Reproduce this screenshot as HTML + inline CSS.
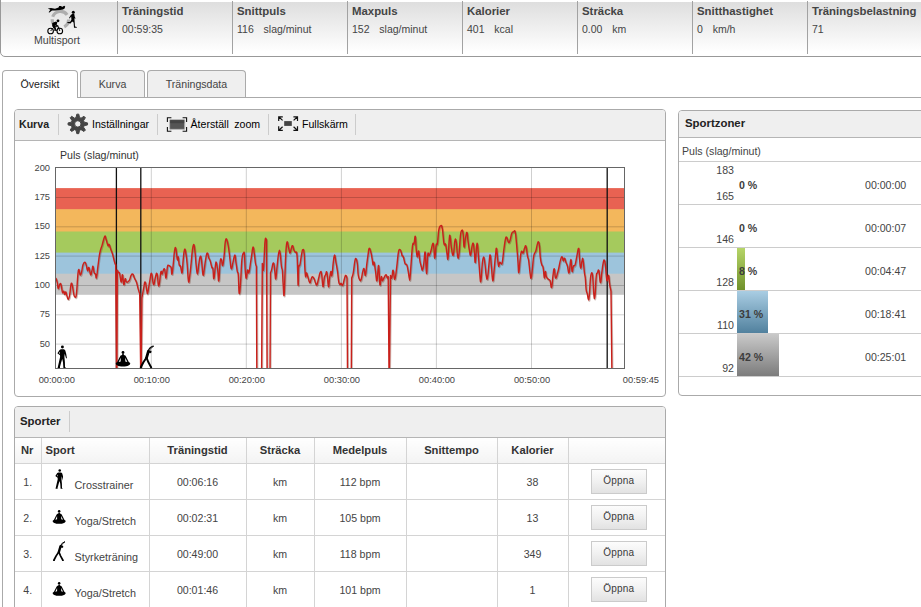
<!DOCTYPE html>
<html><head><meta charset="utf-8"><title>Träning</title>
<style>
*{box-sizing:border-box;margin:0;padding:0}
html,body{width:921px;height:607px;overflow:hidden;background:#fff}
body{font-family:"Liberation Sans",Arial,sans-serif;font-size:10.6px;color:#333;position:relative}
.abs{position:absolute}
#topbar{position:absolute;left:0px;top:-1px;width:926px;height:58px;border:1px solid #999;border-radius:0 0 0 5px;background:linear-gradient(#fff 0,#fff 2px,#dedede 2px,#fff 52px)}
.col{position:absolute;top:1px;height:53px;border-left:1px solid #a2a2a2;margin-left:1px}
.col b{position:absolute;left:4px;top:4px;font-size:11.4px;color:#444;white-space:nowrap}
.col span{position:absolute;left:4px;top:22px;font-size:10.5px;color:#444;white-space:nowrap;word-spacing:2px}
#ms{position:absolute;left:-2px;top:34px;width:116px;text-align:center;color:#444}
.tab{position:absolute;top:70px;height:27px;border:1px solid #aaa;border-bottom:none;border-radius:4px 4px 0 0;background:#efefef;text-align:center;line-height:27px;color:#444;font-size:10.6px}
.tab.on{background:#fff;height:28px;color:#222}
#content{position:absolute;left:2px;top:97px;width:930px;height:520px;border:1px solid #aaa}
.panel{position:absolute;border:1px solid #aaa;border-radius:4px;background:#fff;overflow:hidden}
.ph{position:absolute;left:0;top:0;right:0;height:31px;background:#efefef;border-bottom:1px solid #b5b5b5}
.ph b{position:absolute;left:4px;top:8px;font-size:10.6px;color:#222}
.sep{position:absolute;top:4px;width:1px;height:21px;background:#ccc}
.tb{position:absolute;top:8px;color:#000;white-space:nowrap}
table{border-collapse:collapse}
#st{position:absolute;left:0;top:30.5px;width:651px;table-layout:fixed;font-size:10.6px}
#st td,#st th{border:1px solid #d4d4d4;height:36px;text-align:center;color:#444;vertical-align:middle}
#st th{height:26px;font-size:11.2px;color:#333;background:linear-gradient(#fff,#f3f3f3)}
#st tr td:first-child,#st tr th:first-child{border-left:none}
#st tr td:last-child,#st tr th:last-child{border-right:none}
#st tr:first-child th{border-top:none}
.btn{display:inline-block;position:relative;left:1.5px;top:-0.5px;width:56px;height:25px;border:1px solid #cbcbcb;background:linear-gradient(#fcfcfc,#f2f2f2 45%,#e2e2e2);line-height:22px;font-size:10px;letter-spacing:.2px;color:#3a3a3a;vertical-align:middle}
.zr{position:absolute;left:0;right:0;height:43px;border-top:1px solid #ccc}
.zr .lo,.zr .hi{position:absolute;width:55px;text-align:right;left:0;color:#444}
.zr .pc{position:absolute;left:60px;top:17px;font-weight:bold;color:#3c3c3c;font-size:10.6px}
.zr .tm{position:absolute;left:186px;top:17px;color:#444}
.zr .bar{position:absolute;left:58px;top:0;height:43px}
#st td.sp{text-align:left;white-space:nowrap;vertical-align:bottom;padding-bottom:8px;font-size:10.8px}
#st td.sp svg{vertical-align:baseline}
#st td.sp i{display:inline-block;width:23px;margin-left:6px;text-align:center;font-style:normal;vertical-align:baseline;line-height:0}
#st td.sp span{margin-left:4px}
</style></head><body>
<div id="topbar">
 <svg class="abs" style="left:-1px;top:0" width="120" height="40" viewBox="0 0 120 40"><path d="M52.69 16.80 A8.2 8.2 0 0 1 67.12 14.90 M68.60 19.60 A8.2 8.2 0 0 1 64.25 26.84 M56.30 26.70 A8.2 8.2 0 0 1 52.20 19.31" fill="none" stroke="#a6a6a6" stroke-width="3.2" opacity=".9"/><path d="M47.8 8.6 L51 8 L55 8.8 L58.5 7.4 L59.2 6 L61.2 6 L62 7 L64.2 5.8 L65.2 6.6 L64.6 8.4 L63 9.4 L60 10 L55.5 10.6 L52 10.4 L49.5 12.6 L48.6 12.2 L50.4 9.8 Z" fill="#000"/><circle cx="73.3" cy="12.3" r="1.5" fill="#000"/><path d="M72.4 13.8 L74.2 13.8 L74.8 17 L75.6 18.2 L75 18.8 L74.4 18 L74.6 21 L75 26.4 L76.8 27 L76.8 27.8 L74 27.8 L73.6 22.5 L72.2 21.4 L70.5 23.5 L67.5 23 L67.3 22 L70 22 L71.4 19.8 L71.2 16.5 L69.6 18.4 L69 18 L70.8 15 Z" fill="#000"/><g fill="none" stroke="#000" stroke-width="1.1"><circle cx="50.6" cy="31" r="2.8"/><circle cx="59.8" cy="31" r="2.8"/><path d="M50.6 31 L54.5 26.5 L58.4 26.8 L59.8 31 M54.5 26.5 L56 31 L59 27" stroke-width=".9"/></g><circle cx="58" cy="20.8" r="1.4" fill="#000"/><path d="M52.2 23 L56 21.4 L57.4 22.6 L56.6 24.4 L58.8 26 L58.2 26.8 L55.6 25.6 L54.6 26 L56 28.6 L55.4 31 L54.2 30.8 L54.4 28.8 L52.2 26.2 Z" fill="#000"/></svg>
 <div id="ms">Multisport</div>
 <div class="col" style="left:115px;width:115px"><b>Träningstid</b><span>00:59:35</span></div>
 <div class="col" style="left:230px;width:115px"><b>Snittpuls</b><span>116 &nbsp;slag/minut</span></div>
 <div class="col" style="left:345px;width:115px"><b>Maxpuls</b><span>152 &nbsp;slag/minut</span></div>
 <div class="col" style="left:460px;width:115px"><b>Kalorier</b><span>401 &nbsp;kcal</span></div>
 <div class="col" style="left:575px;width:115px"><b>Sträcka</b><span>0.00 &nbsp;km</span></div>
 <div class="col" style="left:690px;width:115px"><b>Snitthastighet</b><span>0 &nbsp;km/h</span></div>
 <div class="col" style="left:805px;width:119px"><b>Träningsbelastning</b><span>71</span></div>
</div>

<div id="content"></div>
<div class="tab on" style="left:2px;width:76px">Översikt</div>
<div class="tab" style="left:80px;width:65px">Kurva</div>
<div class="tab" style="left:147px;width:99px">Träningsdata</div>

<div class="panel" style="left:14px;top:109px;width:652px;height:288px">
 <div class="ph"><b>Kurva</b>
  <div class="sep" style="left:43px"></div>
  <div class="tb" style="left:77px">Inställningar</div>
  <div class="sep" style="left:142px"></div>
  <div class="tb" style="left:175.5px;word-spacing:2.5px">Återställ zoom</div>
  <div class="sep" style="left:253px"></div>
  <div class="tb" style="left:287px">Fullskärm</div>
  <div class="sep" style="left:340px"></div>
 </div>
</div>
<svg class="abs" style="left:0;top:105px" width="400" height="40" viewBox="0 105 400 40">
<path d="M76.04 117.54 L76.82 114.15 L78.78 114.15 L79.56 117.54 L81.05 118.16 L84.00 116.31 L85.39 117.70 L83.54 120.65 L84.16 122.14 L87.55 122.92 L87.55 124.88 L84.16 125.66 L83.54 127.15 L85.39 130.10 L84.00 131.49 L81.05 129.64 L79.56 130.26 L78.78 133.65 L76.82 133.65 L76.04 130.26 L74.55 129.64 L71.60 131.49 L70.21 130.10 L72.06 127.15 L71.44 125.66 L68.05 124.88 L68.05 122.92 L71.44 122.14 L72.06 120.65 L70.21 117.70 L71.60 116.31 L74.55 118.16Z M81.00 123.90 A3.2 3.2 0 1 0 74.60 123.90 A3.2 3.2 0 1 0 81.00 123.90Z" fill="#454545" fill-rule="evenodd" stroke="#454545" stroke-width="1" stroke-linejoin="round"/>
<g fill="none" stroke="#111" stroke-width="1.1"><path d="M171.4 117.7H167.4V122 M182.6 117.7H186.6V122 M171.4 131.3H167.4V127 M182.6 131.3H186.6V127"/></g>
<rect x="169.6" y="119.6" width="15.2" height="9.8" rx="1" fill="#555" stroke="#bdbdbd" stroke-width="1"/>
<rect x="170.2" y="120.2" width="14" height="3" fill="#444"/>
<g fill="none" stroke="#111" stroke-width="1.2"><path d="M282.8 116.8H278.7V121 M278.9 117L282.6 120.4 M293.4 116.8H297.5V121 M297.3 117L293.6 120.4 M282.8 130.4H278.7V126.2 M278.9 130.2L282.6 126.8 M293.4 130.4H297.5V126.2 M297.3 130.2L293.6 126.8"/></g>
<rect x="284.2" y="121.1" width="7.6" height="4.8" fill="#444"/>
</svg>
<svg id="chart" width="651" height="255" viewBox="14 140 651 255" style="position:absolute;left:14px;top:140px">
<rect x="55" y="167" width="569" height="201" fill="#fff"/>
<rect x="55" y="188.1" width="569" height="21.8" fill="#e86252"/>
<rect x="55" y="209.2" width="569" height="23.0" fill="#f3b75c"/>
<rect x="55" y="231.5" width="569" height="21.8" fill="#a5ca5d"/>
<rect x="55" y="252.6" width="569" height="21.8" fill="#9dc4dc"/>
<rect x="55" y="273.7" width="569" height="21.1" fill="#c6c6c6"/>
<line x1="55" x2="624" y1="197.5" y2="197.5" stroke="#000" stroke-opacity=".19" stroke-width="1"/>
<line x1="55" x2="624" y1="226.8" y2="226.8" stroke="#000" stroke-opacity=".19" stroke-width="1"/>
<line x1="55" x2="624" y1="256.1" y2="256.1" stroke="#000" stroke-opacity=".19" stroke-width="1"/>
<line x1="55" x2="624" y1="285.5" y2="285.5" stroke="#000" stroke-opacity=".19" stroke-width="1"/>
<line x1="55" x2="624" y1="314.8" y2="314.8" stroke="#000" stroke-opacity=".19" stroke-width="1"/>
<line x1="55" x2="624" y1="344.1" y2="344.1" stroke="#000" stroke-opacity=".19" stroke-width="1"/>
<line x1="151.3" x2="151.3" y1="167" y2="368" stroke="#000" stroke-opacity=".19" stroke-width="1"/>
<line x1="246.3" x2="246.3" y1="167" y2="368" stroke="#000" stroke-opacity=".19" stroke-width="1"/>
<line x1="341.4" x2="341.4" y1="167" y2="368" stroke="#000" stroke-opacity=".19" stroke-width="1"/>
<line x1="436.4" x2="436.4" y1="167" y2="368" stroke="#000" stroke-opacity=".19" stroke-width="1"/>
<line x1="531.5" x2="531.5" y1="167" y2="368" stroke="#000" stroke-opacity=".19" stroke-width="1"/>
<line x1="116.4" x2="116.4" y1="167" y2="368" stroke="#111" stroke-width="1.3"/>
<line x1="140.8" x2="140.8" y1="167" y2="368" stroke="#111" stroke-width="1.3"/>
<line x1="607.2" x2="607.2" y1="167" y2="368" stroke="#111" stroke-width="1.3"/>
<clipPath id="cp"><rect x="55" y="167" width="569" height="201"/></clipPath>
<g clip-path="url(#cp)"><path d="M55.9 278.0 C56.2 279.1 56.8 280.1 57.3 282.6 C57.8 285.1 57.6 288.3 58.2 288.6 C58.8 288.9 59.2 284.8 59.9 284.0 C60.6 283.2 60.6 283.3 61.2 285.3 C61.8 287.3 61.9 291.1 62.5 292.5 C63.1 293.9 63.3 290.7 63.8 291.2 C64.3 291.7 64.3 294.3 64.8 294.5 C65.3 294.7 65.3 291.6 65.8 291.9 C66.3 292.2 66.3 294.1 66.9 295.8 C67.5 297.5 67.8 299.6 68.5 299.1 C69.2 298.6 69.2 297.3 69.8 293.8 C70.4 290.3 70.5 285.8 71.1 284.0 C71.7 282.2 71.8 283.6 72.4 285.9 C73.0 288.2 73.1 291.2 73.7 293.8 C74.3 296.4 74.5 297.1 75.1 297.1 C75.7 297.1 75.8 298.6 76.4 293.8 C77.0 289.0 77.2 282.4 77.7 276.7 C78.2 271.0 78.1 270.0 78.7 269.5 C79.3 269.0 79.5 274.0 80.1 274.7 C80.7 275.4 80.7 275.0 81.4 272.7 C82.1 270.4 82.2 267.2 83.0 264.8 C83.8 262.4 84.1 262.0 84.9 262.2 C85.7 262.4 85.7 263.5 86.3 265.5 C86.9 267.5 87.0 270.3 87.6 270.8 C88.2 271.3 88.2 266.6 88.9 267.5 C89.6 268.4 89.9 273.9 90.6 274.7 C91.3 275.5 91.3 272.8 91.9 270.8 C92.5 268.8 92.5 265.8 93.0 266.2 C93.5 266.6 93.6 270.9 94.2 272.7 C94.8 274.5 95.0 273.0 95.5 274.1 C96.0 275.2 95.9 279.6 96.5 277.4 C97.1 275.2 97.3 270.5 98.1 264.8 C98.9 259.1 98.9 257.6 99.8 253.0 C100.7 248.4 101.0 248.9 102.1 245.1 C103.2 241.2 103.8 237.9 104.7 236.5 C105.6 235.1 105.2 237.0 106.0 239.1 C106.8 241.2 107.3 244.5 108.0 245.7 C108.7 246.9 108.5 243.6 109.1 244.4 C109.7 245.2 109.9 246.7 110.7 249.0 C111.5 251.3 111.7 251.2 112.6 254.3 C113.5 257.4 113.9 259.8 114.6 262.2 C115.3 264.6 115.4 264.2 115.7 264.8 L116.5 372 L116.9 372 L117.3 270.1 C117.6 270.7 118.1 271.9 118.6 272.7 C119.1 273.5 119.0 271.2 119.6 273.4 C120.2 275.6 120.5 281.7 121.2 282.0 C121.9 282.3 121.9 274.1 122.5 274.7 C123.1 275.3 123.2 283.7 123.8 284.6 C124.4 285.5 124.6 279.3 125.2 278.7 C125.8 278.1 125.6 281.5 126.5 282.0 C127.4 282.5 128.0 282.2 129.1 280.7 C130.2 279.2 130.2 276.9 131.1 275.4 C132.0 273.9 132.0 273.5 132.8 274.1 C133.6 274.7 133.6 276.2 134.4 278.0 C135.2 279.8 135.5 279.5 136.4 282.0 C137.3 284.5 137.3 285.8 138.1 288.6 C138.9 291.4 139.3 292.6 139.7 293.8 L140.7 372 L141.1 372 L141.9 297.8 C142.3 295.7 142.8 292.3 143.6 288.6 C144.4 284.9 144.4 281.4 145.2 282.0 C146.0 282.6 146.3 288.8 146.9 291.2 C147.5 293.6 147.2 294.6 147.8 292.5 C148.4 290.4 148.7 286.5 149.6 282.0 C150.5 277.5 150.6 272.8 151.5 273.4 C152.4 274.0 152.6 283.8 153.5 284.6 C154.4 285.4 154.7 279.1 155.5 276.7 C156.3 274.2 156.3 272.0 157.1 274.1 C157.9 276.2 157.9 286.4 158.8 285.9 C159.7 285.4 160.0 274.9 160.8 272.1 C161.6 269.3 161.5 274.6 162.1 274.1 C162.7 273.6 162.8 271.2 163.4 270.1 C164.0 269.0 164.1 267.7 164.7 269.5 C165.3 271.3 165.4 278.6 166.0 278.0 C166.6 277.4 166.8 269.7 167.4 266.8 C168.0 263.9 168.1 265.6 168.7 265.5 C169.3 265.4 169.4 265.7 170.0 266.2 C170.6 266.7 170.6 265.7 171.1 267.5 C171.6 269.3 171.5 275.0 172.0 274.1 C172.5 273.2 172.7 269.1 173.3 263.5 C173.9 257.9 174.0 253.7 174.6 250.3 C175.2 246.9 175.3 246.8 175.9 249.0 C176.5 251.2 176.8 257.8 177.3 259.6 C177.8 261.4 177.8 255.7 178.2 256.9 C178.6 258.1 178.7 262.6 179.2 264.8 C179.7 267.0 179.8 264.4 180.5 266.2 C181.2 268.0 181.5 274.2 182.1 272.7 C182.7 271.2 182.6 265.0 183.2 259.6 C183.8 254.2 183.9 251.2 184.5 249.7 C185.1 248.2 185.2 249.8 185.8 253.0 C186.4 256.2 186.5 256.9 187.1 263.5 C187.7 270.1 187.9 278.5 188.5 281.3 C189.1 284.1 189.2 279.6 189.8 275.4 C190.4 271.2 190.5 269.4 191.1 263.5 C191.7 257.6 191.8 254.8 192.4 250.3 C193.0 245.8 193.1 244.4 193.7 244.4 C194.3 244.4 194.2 245.5 194.8 250.3 C195.4 255.1 195.5 259.2 196.1 264.8 C196.7 270.4 196.8 274.1 197.4 274.1 C198.0 274.1 198.1 268.8 198.7 264.8 C199.3 260.8 199.5 258.1 200.1 256.9 C200.7 255.7 200.7 255.4 201.4 259.6 C202.1 263.8 202.3 272.6 203.0 274.7 C203.7 276.8 203.7 272.3 204.3 268.8 C204.9 265.3 204.9 263.3 205.6 259.6 C206.3 255.9 206.4 253.3 207.2 253.0 C208.0 252.7 208.2 256.4 208.9 258.2 C209.6 260.0 209.5 258.7 210.2 260.9 C210.9 263.1 211.3 265.7 211.9 267.5 C212.5 269.3 212.4 266.2 212.9 268.8 C213.4 271.4 213.3 279.6 213.9 278.7 C214.5 277.8 214.9 268.5 215.5 264.8 C216.1 261.1 215.9 261.7 216.4 262.9 C216.9 264.1 217.1 265.9 217.7 270.1 C218.3 274.3 218.2 282.5 218.8 280.7 C219.4 278.9 219.5 267.1 220.1 262.2 C220.7 257.3 220.8 258.8 221.4 259.6 C222.0 260.4 222.1 266.4 222.7 265.5 C223.3 264.6 223.5 261.3 224.1 255.6 C224.7 249.9 224.7 244.6 225.4 241.1 C226.1 237.6 226.2 238.6 227.0 240.4 C227.8 242.2 228.0 244.5 228.7 249.0 C229.4 253.5 229.4 255.0 230.0 259.6 C230.6 264.2 230.6 268.2 231.3 268.8 C232.0 269.4 232.2 265.4 233.0 262.2 C233.8 259.0 234.2 254.9 234.9 254.9 C235.6 254.9 235.3 258.4 235.9 262.2 C236.5 266.0 236.7 268.3 237.3 271.4 C237.9 274.5 237.9 270.3 238.3 275.4 C238.7 280.5 238.7 291.4 239.2 293.2 C239.7 295.0 239.9 291.1 240.5 283.3 C241.1 275.5 241.2 266.7 241.9 259.6 C242.6 252.5 243.0 253.9 243.6 253.0 C244.2 252.1 244.1 251.0 244.5 255.6 C244.9 260.2 244.9 267.5 245.4 272.7 C245.9 277.9 246.0 278.6 246.5 278.0 C247.0 277.4 246.9 271.3 247.5 270.1 C248.1 268.9 248.2 274.2 248.9 272.7 C249.6 271.2 249.7 267.8 250.4 263.5 C251.1 259.2 251.2 258.2 251.8 254.3 C252.4 250.5 252.5 247.0 253.1 247.0 C253.7 247.0 253.8 250.5 254.4 254.3 C255.0 258.2 255.0 260.7 255.5 263.5 C256.0 266.3 256.2 265.6 256.4 266.2 L256.8 372 L261.6 372 L262.3 263.5 C262.6 265.0 262.9 272.2 263.4 270.1 C263.9 268.0 263.9 261.4 264.3 254.3 C264.7 247.2 264.7 243.2 265.2 239.8 C265.7 236.4 266.2 239.8 266.5 239.8 L267.1 372 L270.0 372 L270.5 272.7 C270.7 272.1 270.8 272.4 271.5 270.1 C272.2 267.8 272.7 262.6 273.5 262.9 C274.3 263.2 274.3 267.7 274.8 271.4 C275.3 275.1 275.3 279.9 275.8 278.7 C276.3 277.5 276.4 272.4 277.1 266.2 C277.8 260.0 278.1 255.4 278.8 252.3 C279.5 249.2 279.5 249.8 280.1 253.0 C280.7 256.2 280.9 262.0 281.4 266.2 C281.9 270.4 282.0 266.8 282.4 270.8 C282.8 274.8 282.7 277.6 283.1 283.3 C283.5 289.0 283.7 297.7 284.1 295.2 C284.5 292.7 284.6 283.2 285.0 272.7 C285.4 262.2 285.5 257.5 286.0 250.3 C286.5 243.1 286.5 242.2 287.1 241.8 C287.7 241.4 288.0 245.8 288.7 248.4 C289.4 251.0 289.4 253.0 290.0 253.0 C290.6 253.0 290.7 250.1 291.3 248.4 C291.9 246.7 292.0 245.3 292.6 245.7 C293.2 246.1 293.3 248.8 294.0 250.3 C294.7 251.8 294.8 251.4 295.5 252.3 C296.2 253.2 296.4 250.1 296.9 254.3 C297.4 258.5 297.3 262.9 297.6 270.1 C297.9 277.3 297.9 285.9 298.2 285.3 C298.5 284.7 298.3 272.3 298.7 267.5 C299.1 262.7 299.2 267.9 299.9 264.8 C300.6 261.7 300.9 257.8 301.6 254.3 C302.3 250.8 302.2 250.0 302.8 249.7 C303.4 249.4 303.6 248.8 304.1 253.0 C304.6 257.2 304.4 262.0 304.8 267.5 C305.2 273.0 305.2 275.5 305.6 276.7 C306.0 277.9 306.0 272.7 306.5 272.7 C307.0 272.7 307.0 274.4 307.8 276.7 C308.6 279.0 309.0 282.0 309.8 282.6 C310.6 283.2 310.5 280.7 311.1 279.3 C311.7 277.9 311.7 276.8 312.4 276.7 C313.1 276.6 313.2 277.2 314.0 278.7 C314.8 280.2 315.0 281.9 315.7 283.3 C316.4 284.7 316.3 285.8 317.0 284.6 C317.7 283.4 317.9 280.9 318.7 278.0 C319.5 275.1 319.6 273.0 320.3 272.1 C321.0 271.2 321.0 270.7 321.6 274.1 C322.2 277.5 322.4 285.7 323.0 286.6 C323.6 287.5 323.7 280.8 324.3 278.0 C324.9 275.2 325.0 275.9 325.6 274.7 C326.2 273.5 326.2 269.9 326.9 272.7 C327.6 275.5 327.9 285.4 328.5 286.6 C329.1 287.8 329.0 281.5 329.6 278.0 C330.2 274.5 330.4 272.0 330.9 271.4 C331.4 270.8 331.3 277.5 331.9 275.4 C332.5 273.3 332.7 267.0 333.3 262.2 C333.9 257.4 334.0 254.9 334.6 254.9 C335.2 254.9 335.2 258.4 335.9 262.2 C336.6 266.0 336.8 266.8 337.5 271.4 C338.2 276.0 338.2 278.9 338.8 282.0 C339.4 285.1 339.5 284.3 340.1 284.6 C340.7 284.9 340.6 283.1 341.2 283.3 C341.8 283.5 342.0 286.2 342.7 285.3 C343.4 284.4 343.6 281.6 344.3 279.3 C345.0 277.0 345.0 275.7 345.6 275.4 C346.2 275.1 346.7 277.4 347.0 278.0 L347.5 372 L351.3 372 L351.7 278.0 C352.1 276.8 352.6 276.7 353.3 272.7 C354.0 268.7 354.2 264.1 354.9 260.9 C355.6 257.7 355.6 258.3 356.2 258.9 C356.8 259.5 356.8 259.6 357.3 263.5 C357.8 267.4 357.7 271.5 358.3 275.4 C358.9 279.2 359.2 279.1 359.9 280.0 C360.6 280.9 360.5 281.3 361.2 279.3 C361.9 277.3 362.1 273.8 362.8 271.4 C363.5 268.9 363.5 267.9 364.1 268.8 C364.7 269.7 364.8 276.3 365.4 275.4 C366.0 274.5 366.1 269.7 366.7 264.8 C367.3 259.9 367.5 258.1 368.1 254.3 C368.7 250.5 368.5 249.0 369.1 248.4 C369.7 247.8 370.0 249.3 370.7 251.6 C371.4 253.9 371.4 255.1 372.0 258.2 C372.6 261.3 372.6 263.9 373.1 264.8 C373.6 265.7 373.5 260.7 374.1 262.2 C374.7 263.7 374.8 267.1 375.5 271.4 C376.2 275.7 376.3 282.1 377.0 280.7 C377.7 279.3 377.9 264.6 378.6 265.5 C379.3 266.4 379.3 282.0 379.9 284.6 C380.5 287.2 380.7 277.6 381.3 276.7 C381.9 275.8 381.7 280.4 382.3 280.7 C382.9 281.0 383.0 279.4 383.9 278.0 C384.8 276.6 385.2 274.7 386.0 274.7 C386.8 274.7 386.8 277.5 387.3 278.0 C387.8 278.5 388.0 277.0 388.2 276.7 L389.0 372 L389.4 372 L390.5 275.4 C390.8 276.0 391.2 279.2 391.8 278.0 C392.4 276.8 392.4 269.8 393.1 270.1 C393.8 270.4 394.0 279.6 394.8 279.3 C395.6 279.0 395.7 274.6 396.5 268.8 C397.3 263.0 397.5 258.8 398.1 254.3 C398.7 249.8 398.6 250.5 399.2 249.7 C399.8 248.9 400.1 249.6 400.8 251.0 C401.5 252.4 401.5 254.2 402.1 255.6 C402.7 257.0 402.7 255.1 403.4 256.9 C404.1 258.7 404.2 261.7 405.0 263.5 C405.8 265.3 406.0 263.3 406.7 264.8 C407.4 266.3 407.4 267.0 408.0 270.1 C408.6 273.2 408.8 276.2 409.3 278.0 C409.8 279.8 409.6 281.4 410.0 278.0 C410.4 274.6 410.5 271.2 411.1 263.5 C411.7 255.8 411.9 249.7 412.6 245.1 C413.3 240.5 413.4 245.7 414.0 243.7 C414.6 241.7 414.8 235.0 415.3 236.5 C415.8 238.0 415.8 245.5 416.3 250.3 C416.8 255.1 416.8 256.7 417.3 256.9 C417.8 257.1 418.0 250.1 418.6 251.0 C419.2 251.9 419.3 257.4 419.9 260.9 C420.5 264.4 420.6 264.1 421.2 266.2 C421.8 268.3 421.9 270.7 422.5 270.1 C423.1 269.5 423.2 267.7 423.8 263.5 C424.4 259.3 424.6 250.0 425.2 252.3 C425.8 254.6 425.9 272.9 426.5 273.4 C427.1 273.9 427.2 258.5 427.8 254.3 C428.4 250.1 428.3 256.5 429.1 255.6 C429.9 254.7 430.3 253.1 431.1 250.3 C431.9 247.5 432.1 244.6 432.7 243.7 C433.3 242.8 433.2 243.0 433.7 246.4 C434.2 249.8 434.2 258.5 434.8 258.2 C435.4 257.9 435.5 248.5 436.1 245.1 C436.7 241.7 436.8 247.1 437.4 243.7 C438.0 240.3 438.0 234.7 438.7 230.5 C439.4 226.3 439.8 226.3 440.6 225.9 C441.4 225.5 441.5 224.4 442.3 228.6 C443.1 232.8 443.2 240.0 444.0 243.7 C444.8 247.4 444.9 242.2 445.6 244.4 C446.3 246.6 446.3 249.8 446.9 253.0 C447.5 256.2 447.4 261.6 448.0 258.2 C448.6 254.8 448.8 243.4 449.3 238.5 C449.8 233.6 449.7 234.8 450.2 237.1 C450.7 239.4 450.8 244.2 451.5 248.4 C452.2 252.6 452.5 256.6 453.3 254.9 C454.1 253.2 454.1 244.2 454.8 241.1 C455.5 238.0 455.5 238.1 456.2 241.8 C456.9 245.5 457.0 254.3 457.7 256.9 C458.4 259.5 458.5 257.9 459.1 253.0 C459.7 248.1 459.8 241.1 460.4 235.8 C461.0 230.6 461.1 231.1 461.7 230.5 C462.3 229.9 462.4 229.3 463.0 233.2 C463.6 237.0 463.5 245.8 464.1 247.0 C464.7 248.2 464.7 241.9 465.4 238.5 C466.1 235.1 466.4 231.9 467.0 232.5 C467.6 233.1 467.4 236.6 468.0 241.1 C468.6 245.6 469.0 248.4 469.6 251.6 C470.2 254.8 470.1 256.1 470.7 254.9 C471.3 253.7 471.4 249.0 472.0 246.4 C472.6 243.8 472.7 242.2 473.3 243.7 C473.9 245.2 473.9 248.7 474.4 253.0 C474.9 257.3 474.8 263.7 475.3 262.2 C475.8 260.7 476.1 250.4 476.6 246.4 C477.1 242.4 477.0 242.3 477.5 245.1 C478.0 247.9 478.0 251.1 478.6 258.2 C479.2 265.3 479.4 270.1 479.9 275.4 C480.4 280.6 480.3 283.5 480.9 280.7 C481.5 277.9 481.7 269.1 482.3 263.5 C482.9 257.9 483.0 256.9 483.6 256.9 C484.2 256.9 484.3 259.2 484.9 263.5 C485.5 267.8 485.6 272.0 486.2 275.4 C486.8 278.8 486.9 280.5 487.5 278.0 C488.1 275.5 488.3 270.2 488.9 264.8 C489.5 259.4 489.6 254.3 490.2 254.9 C490.8 255.5 490.9 261.5 491.5 267.5 C492.1 273.5 492.2 280.1 492.8 280.7 C493.4 281.3 493.5 276.0 494.1 270.1 C494.7 264.2 494.9 260.7 495.5 255.6 C496.1 250.5 496.0 247.5 496.5 248.4 C497.0 249.3 497.2 255.4 497.7 259.6 C498.2 263.8 498.1 265.6 498.6 266.2 C499.1 266.8 499.1 262.8 499.7 262.2 C500.3 261.6 500.4 263.5 501.0 263.5 C501.6 263.5 501.6 265.6 502.3 262.2 C503.0 258.8 503.1 254.5 503.9 249.0 C504.7 243.5 504.9 241.1 505.6 238.5 C506.3 235.9 506.2 236.9 506.9 237.8 C507.6 238.7 507.8 241.9 508.6 242.4 C509.4 242.9 509.5 241.9 510.2 239.8 C510.9 237.7 511.0 235.0 511.8 233.2 C512.6 231.4 512.7 232.2 513.5 231.9 C514.3 231.6 514.5 229.1 515.2 231.9 C515.9 234.7 515.9 236.9 516.5 243.7 C517.1 250.5 517.4 254.1 517.9 260.9 C518.4 267.7 518.3 273.0 518.8 272.7 C519.3 272.4 519.5 264.5 520.1 259.6 C520.7 254.7 520.7 253.1 521.4 251.6 C522.1 250.1 522.4 253.7 523.1 253.0 C523.8 252.3 523.8 249.9 524.5 248.4 C525.2 246.9 525.3 244.7 526.0 246.4 C526.7 248.1 526.8 252.2 527.4 255.6 C528.0 259.0 528.1 256.9 528.7 260.9 C529.3 264.9 529.4 268.7 530.0 272.7 C530.6 276.7 530.6 279.2 531.2 278.0 C531.8 276.8 531.9 272.7 532.5 267.5 C533.1 262.3 533.0 259.4 533.8 255.6 C534.6 251.8 535.0 253.4 535.8 251.0 C536.6 248.6 536.5 247.2 537.1 245.1 C537.7 243.0 537.9 241.5 538.5 241.8 C539.1 242.1 539.1 242.6 539.5 246.4 C539.9 250.2 539.9 253.9 540.4 258.2 C540.9 262.5 541.2 262.6 541.8 264.8 C542.4 267.0 542.5 264.4 543.1 267.5 C543.7 270.6 543.9 277.1 544.4 278.0 C544.9 278.9 544.8 271.7 545.3 271.4 C545.8 271.1 545.7 274.9 546.4 276.7 C547.1 278.5 547.5 278.4 548.4 279.3 C549.3 280.2 549.4 278.8 550.1 280.7 C550.8 282.6 550.9 288.5 551.6 287.3 C552.3 286.1 552.4 279.7 553.0 275.4 C553.6 271.1 553.7 268.2 554.3 268.8 C554.9 269.4 554.8 277.1 555.6 278.0 C556.4 278.9 556.8 275.1 557.6 272.7 C558.4 270.2 558.2 270.6 558.9 267.5 C559.6 264.4 559.8 262.1 560.6 259.6 C561.4 257.1 561.6 256.6 562.2 256.9 C562.8 257.2 562.7 260.6 563.3 260.9 C563.9 261.2 564.0 257.9 564.6 258.2 C565.2 258.5 565.2 260.3 565.9 262.2 C566.6 264.1 566.8 263.8 567.5 266.2 C568.2 268.6 568.3 274.2 569.1 272.7 C569.9 271.2 570.1 259.9 570.8 259.6 C571.5 259.3 571.5 269.9 572.1 271.4 C572.7 272.9 572.7 267.7 573.4 266.2 C574.1 264.7 574.3 267.0 575.1 264.8 C575.9 262.6 575.9 260.7 576.7 256.9 C577.5 253.1 578.0 247.8 578.7 248.4 C579.4 249.0 579.1 255.0 579.6 259.6 C580.1 264.2 580.1 267.8 580.7 268.1 C581.3 268.4 581.5 262.9 582.0 260.9 C582.5 258.9 582.4 256.8 583.0 259.6 C583.6 262.4 583.9 268.4 584.4 272.7 C584.9 277.0 584.9 274.0 585.3 278.0 C585.7 282.0 585.7 286.2 586.2 289.9 C586.7 293.6 586.8 291.7 587.3 293.8 C587.8 295.9 587.9 298.5 588.3 299.1 C588.7 299.7 588.7 301.4 589.2 296.5 C589.7 291.6 589.9 283.6 590.5 278.0 C591.1 272.4 591.4 272.7 591.9 272.7 C592.4 272.7 592.4 273.1 592.8 278.0 C593.2 282.9 593.3 289.5 593.8 293.8 C594.3 298.1 594.3 300.5 594.9 296.5 C595.5 292.5 595.6 282.3 596.2 276.7 C596.8 271.1 596.9 274.1 597.5 272.7 C598.1 271.3 598.2 268.5 598.9 270.8 C599.6 273.1 599.7 282.2 600.4 282.6 C601.1 283.0 601.2 277.2 601.8 272.7 C602.4 268.2 602.5 266.4 603.1 263.5 C603.7 260.6 603.8 259.6 604.4 260.2 C605.0 260.8 605.0 262.3 605.5 266.2 C606.0 270.1 606.0 273.3 606.4 276.7 C606.8 280.1 606.8 281.0 607.3 280.7 C607.8 280.4 608.0 274.5 608.6 275.4 C609.2 276.3 609.1 280.9 609.7 284.6 C610.3 288.3 610.7 289.7 611.0 291.2 L611.9 372" fill="none" stroke="#6a2a1a" stroke-opacity=".32" stroke-width="1.8" transform="translate(0.7,1)" stroke-linejoin="round"/><path d="M55.9 278.0 C56.2 279.1 56.8 280.1 57.3 282.6 C57.8 285.1 57.6 288.3 58.2 288.6 C58.8 288.9 59.2 284.8 59.9 284.0 C60.6 283.2 60.6 283.3 61.2 285.3 C61.8 287.3 61.9 291.1 62.5 292.5 C63.1 293.9 63.3 290.7 63.8 291.2 C64.3 291.7 64.3 294.3 64.8 294.5 C65.3 294.7 65.3 291.6 65.8 291.9 C66.3 292.2 66.3 294.1 66.9 295.8 C67.5 297.5 67.8 299.6 68.5 299.1 C69.2 298.6 69.2 297.3 69.8 293.8 C70.4 290.3 70.5 285.8 71.1 284.0 C71.7 282.2 71.8 283.6 72.4 285.9 C73.0 288.2 73.1 291.2 73.7 293.8 C74.3 296.4 74.5 297.1 75.1 297.1 C75.7 297.1 75.8 298.6 76.4 293.8 C77.0 289.0 77.2 282.4 77.7 276.7 C78.2 271.0 78.1 270.0 78.7 269.5 C79.3 269.0 79.5 274.0 80.1 274.7 C80.7 275.4 80.7 275.0 81.4 272.7 C82.1 270.4 82.2 267.2 83.0 264.8 C83.8 262.4 84.1 262.0 84.9 262.2 C85.7 262.4 85.7 263.5 86.3 265.5 C86.9 267.5 87.0 270.3 87.6 270.8 C88.2 271.3 88.2 266.6 88.9 267.5 C89.6 268.4 89.9 273.9 90.6 274.7 C91.3 275.5 91.3 272.8 91.9 270.8 C92.5 268.8 92.5 265.8 93.0 266.2 C93.5 266.6 93.6 270.9 94.2 272.7 C94.8 274.5 95.0 273.0 95.5 274.1 C96.0 275.2 95.9 279.6 96.5 277.4 C97.1 275.2 97.3 270.5 98.1 264.8 C98.9 259.1 98.9 257.6 99.8 253.0 C100.7 248.4 101.0 248.9 102.1 245.1 C103.2 241.2 103.8 237.9 104.7 236.5 C105.6 235.1 105.2 237.0 106.0 239.1 C106.8 241.2 107.3 244.5 108.0 245.7 C108.7 246.9 108.5 243.6 109.1 244.4 C109.7 245.2 109.9 246.7 110.7 249.0 C111.5 251.3 111.7 251.2 112.6 254.3 C113.5 257.4 113.9 259.8 114.6 262.2 C115.3 264.6 115.4 264.2 115.7 264.8 L116.5 372 L116.9 372 L117.3 270.1 C117.6 270.7 118.1 271.9 118.6 272.7 C119.1 273.5 119.0 271.2 119.6 273.4 C120.2 275.6 120.5 281.7 121.2 282.0 C121.9 282.3 121.9 274.1 122.5 274.7 C123.1 275.3 123.2 283.7 123.8 284.6 C124.4 285.5 124.6 279.3 125.2 278.7 C125.8 278.1 125.6 281.5 126.5 282.0 C127.4 282.5 128.0 282.2 129.1 280.7 C130.2 279.2 130.2 276.9 131.1 275.4 C132.0 273.9 132.0 273.5 132.8 274.1 C133.6 274.7 133.6 276.2 134.4 278.0 C135.2 279.8 135.5 279.5 136.4 282.0 C137.3 284.5 137.3 285.8 138.1 288.6 C138.9 291.4 139.3 292.6 139.7 293.8 L140.7 372 L141.1 372 L141.9 297.8 C142.3 295.7 142.8 292.3 143.6 288.6 C144.4 284.9 144.4 281.4 145.2 282.0 C146.0 282.6 146.3 288.8 146.9 291.2 C147.5 293.6 147.2 294.6 147.8 292.5 C148.4 290.4 148.7 286.5 149.6 282.0 C150.5 277.5 150.6 272.8 151.5 273.4 C152.4 274.0 152.6 283.8 153.5 284.6 C154.4 285.4 154.7 279.1 155.5 276.7 C156.3 274.2 156.3 272.0 157.1 274.1 C157.9 276.2 157.9 286.4 158.8 285.9 C159.7 285.4 160.0 274.9 160.8 272.1 C161.6 269.3 161.5 274.6 162.1 274.1 C162.7 273.6 162.8 271.2 163.4 270.1 C164.0 269.0 164.1 267.7 164.7 269.5 C165.3 271.3 165.4 278.6 166.0 278.0 C166.6 277.4 166.8 269.7 167.4 266.8 C168.0 263.9 168.1 265.6 168.7 265.5 C169.3 265.4 169.4 265.7 170.0 266.2 C170.6 266.7 170.6 265.7 171.1 267.5 C171.6 269.3 171.5 275.0 172.0 274.1 C172.5 273.2 172.7 269.1 173.3 263.5 C173.9 257.9 174.0 253.7 174.6 250.3 C175.2 246.9 175.3 246.8 175.9 249.0 C176.5 251.2 176.8 257.8 177.3 259.6 C177.8 261.4 177.8 255.7 178.2 256.9 C178.6 258.1 178.7 262.6 179.2 264.8 C179.7 267.0 179.8 264.4 180.5 266.2 C181.2 268.0 181.5 274.2 182.1 272.7 C182.7 271.2 182.6 265.0 183.2 259.6 C183.8 254.2 183.9 251.2 184.5 249.7 C185.1 248.2 185.2 249.8 185.8 253.0 C186.4 256.2 186.5 256.9 187.1 263.5 C187.7 270.1 187.9 278.5 188.5 281.3 C189.1 284.1 189.2 279.6 189.8 275.4 C190.4 271.2 190.5 269.4 191.1 263.5 C191.7 257.6 191.8 254.8 192.4 250.3 C193.0 245.8 193.1 244.4 193.7 244.4 C194.3 244.4 194.2 245.5 194.8 250.3 C195.4 255.1 195.5 259.2 196.1 264.8 C196.7 270.4 196.8 274.1 197.4 274.1 C198.0 274.1 198.1 268.8 198.7 264.8 C199.3 260.8 199.5 258.1 200.1 256.9 C200.7 255.7 200.7 255.4 201.4 259.6 C202.1 263.8 202.3 272.6 203.0 274.7 C203.7 276.8 203.7 272.3 204.3 268.8 C204.9 265.3 204.9 263.3 205.6 259.6 C206.3 255.9 206.4 253.3 207.2 253.0 C208.0 252.7 208.2 256.4 208.9 258.2 C209.6 260.0 209.5 258.7 210.2 260.9 C210.9 263.1 211.3 265.7 211.9 267.5 C212.5 269.3 212.4 266.2 212.9 268.8 C213.4 271.4 213.3 279.6 213.9 278.7 C214.5 277.8 214.9 268.5 215.5 264.8 C216.1 261.1 215.9 261.7 216.4 262.9 C216.9 264.1 217.1 265.9 217.7 270.1 C218.3 274.3 218.2 282.5 218.8 280.7 C219.4 278.9 219.5 267.1 220.1 262.2 C220.7 257.3 220.8 258.8 221.4 259.6 C222.0 260.4 222.1 266.4 222.7 265.5 C223.3 264.6 223.5 261.3 224.1 255.6 C224.7 249.9 224.7 244.6 225.4 241.1 C226.1 237.6 226.2 238.6 227.0 240.4 C227.8 242.2 228.0 244.5 228.7 249.0 C229.4 253.5 229.4 255.0 230.0 259.6 C230.6 264.2 230.6 268.2 231.3 268.8 C232.0 269.4 232.2 265.4 233.0 262.2 C233.8 259.0 234.2 254.9 234.9 254.9 C235.6 254.9 235.3 258.4 235.9 262.2 C236.5 266.0 236.7 268.3 237.3 271.4 C237.9 274.5 237.9 270.3 238.3 275.4 C238.7 280.5 238.7 291.4 239.2 293.2 C239.7 295.0 239.9 291.1 240.5 283.3 C241.1 275.5 241.2 266.7 241.9 259.6 C242.6 252.5 243.0 253.9 243.6 253.0 C244.2 252.1 244.1 251.0 244.5 255.6 C244.9 260.2 244.9 267.5 245.4 272.7 C245.9 277.9 246.0 278.6 246.5 278.0 C247.0 277.4 246.9 271.3 247.5 270.1 C248.1 268.9 248.2 274.2 248.9 272.7 C249.6 271.2 249.7 267.8 250.4 263.5 C251.1 259.2 251.2 258.2 251.8 254.3 C252.4 250.5 252.5 247.0 253.1 247.0 C253.7 247.0 253.8 250.5 254.4 254.3 C255.0 258.2 255.0 260.7 255.5 263.5 C256.0 266.3 256.2 265.6 256.4 266.2 L256.8 372 L261.6 372 L262.3 263.5 C262.6 265.0 262.9 272.2 263.4 270.1 C263.9 268.0 263.9 261.4 264.3 254.3 C264.7 247.2 264.7 243.2 265.2 239.8 C265.7 236.4 266.2 239.8 266.5 239.8 L267.1 372 L270.0 372 L270.5 272.7 C270.7 272.1 270.8 272.4 271.5 270.1 C272.2 267.8 272.7 262.6 273.5 262.9 C274.3 263.2 274.3 267.7 274.8 271.4 C275.3 275.1 275.3 279.9 275.8 278.7 C276.3 277.5 276.4 272.4 277.1 266.2 C277.8 260.0 278.1 255.4 278.8 252.3 C279.5 249.2 279.5 249.8 280.1 253.0 C280.7 256.2 280.9 262.0 281.4 266.2 C281.9 270.4 282.0 266.8 282.4 270.8 C282.8 274.8 282.7 277.6 283.1 283.3 C283.5 289.0 283.7 297.7 284.1 295.2 C284.5 292.7 284.6 283.2 285.0 272.7 C285.4 262.2 285.5 257.5 286.0 250.3 C286.5 243.1 286.5 242.2 287.1 241.8 C287.7 241.4 288.0 245.8 288.7 248.4 C289.4 251.0 289.4 253.0 290.0 253.0 C290.6 253.0 290.7 250.1 291.3 248.4 C291.9 246.7 292.0 245.3 292.6 245.7 C293.2 246.1 293.3 248.8 294.0 250.3 C294.7 251.8 294.8 251.4 295.5 252.3 C296.2 253.2 296.4 250.1 296.9 254.3 C297.4 258.5 297.3 262.9 297.6 270.1 C297.9 277.3 297.9 285.9 298.2 285.3 C298.5 284.7 298.3 272.3 298.7 267.5 C299.1 262.7 299.2 267.9 299.9 264.8 C300.6 261.7 300.9 257.8 301.6 254.3 C302.3 250.8 302.2 250.0 302.8 249.7 C303.4 249.4 303.6 248.8 304.1 253.0 C304.6 257.2 304.4 262.0 304.8 267.5 C305.2 273.0 305.2 275.5 305.6 276.7 C306.0 277.9 306.0 272.7 306.5 272.7 C307.0 272.7 307.0 274.4 307.8 276.7 C308.6 279.0 309.0 282.0 309.8 282.6 C310.6 283.2 310.5 280.7 311.1 279.3 C311.7 277.9 311.7 276.8 312.4 276.7 C313.1 276.6 313.2 277.2 314.0 278.7 C314.8 280.2 315.0 281.9 315.7 283.3 C316.4 284.7 316.3 285.8 317.0 284.6 C317.7 283.4 317.9 280.9 318.7 278.0 C319.5 275.1 319.6 273.0 320.3 272.1 C321.0 271.2 321.0 270.7 321.6 274.1 C322.2 277.5 322.4 285.7 323.0 286.6 C323.6 287.5 323.7 280.8 324.3 278.0 C324.9 275.2 325.0 275.9 325.6 274.7 C326.2 273.5 326.2 269.9 326.9 272.7 C327.6 275.5 327.9 285.4 328.5 286.6 C329.1 287.8 329.0 281.5 329.6 278.0 C330.2 274.5 330.4 272.0 330.9 271.4 C331.4 270.8 331.3 277.5 331.9 275.4 C332.5 273.3 332.7 267.0 333.3 262.2 C333.9 257.4 334.0 254.9 334.6 254.9 C335.2 254.9 335.2 258.4 335.9 262.2 C336.6 266.0 336.8 266.8 337.5 271.4 C338.2 276.0 338.2 278.9 338.8 282.0 C339.4 285.1 339.5 284.3 340.1 284.6 C340.7 284.9 340.6 283.1 341.2 283.3 C341.8 283.5 342.0 286.2 342.7 285.3 C343.4 284.4 343.6 281.6 344.3 279.3 C345.0 277.0 345.0 275.7 345.6 275.4 C346.2 275.1 346.7 277.4 347.0 278.0 L347.5 372 L351.3 372 L351.7 278.0 C352.1 276.8 352.6 276.7 353.3 272.7 C354.0 268.7 354.2 264.1 354.9 260.9 C355.6 257.7 355.6 258.3 356.2 258.9 C356.8 259.5 356.8 259.6 357.3 263.5 C357.8 267.4 357.7 271.5 358.3 275.4 C358.9 279.2 359.2 279.1 359.9 280.0 C360.6 280.9 360.5 281.3 361.2 279.3 C361.9 277.3 362.1 273.8 362.8 271.4 C363.5 268.9 363.5 267.9 364.1 268.8 C364.7 269.7 364.8 276.3 365.4 275.4 C366.0 274.5 366.1 269.7 366.7 264.8 C367.3 259.9 367.5 258.1 368.1 254.3 C368.7 250.5 368.5 249.0 369.1 248.4 C369.7 247.8 370.0 249.3 370.7 251.6 C371.4 253.9 371.4 255.1 372.0 258.2 C372.6 261.3 372.6 263.9 373.1 264.8 C373.6 265.7 373.5 260.7 374.1 262.2 C374.7 263.7 374.8 267.1 375.5 271.4 C376.2 275.7 376.3 282.1 377.0 280.7 C377.7 279.3 377.9 264.6 378.6 265.5 C379.3 266.4 379.3 282.0 379.9 284.6 C380.5 287.2 380.7 277.6 381.3 276.7 C381.9 275.8 381.7 280.4 382.3 280.7 C382.9 281.0 383.0 279.4 383.9 278.0 C384.8 276.6 385.2 274.7 386.0 274.7 C386.8 274.7 386.8 277.5 387.3 278.0 C387.8 278.5 388.0 277.0 388.2 276.7 L389.0 372 L389.4 372 L390.5 275.4 C390.8 276.0 391.2 279.2 391.8 278.0 C392.4 276.8 392.4 269.8 393.1 270.1 C393.8 270.4 394.0 279.6 394.8 279.3 C395.6 279.0 395.7 274.6 396.5 268.8 C397.3 263.0 397.5 258.8 398.1 254.3 C398.7 249.8 398.6 250.5 399.2 249.7 C399.8 248.9 400.1 249.6 400.8 251.0 C401.5 252.4 401.5 254.2 402.1 255.6 C402.7 257.0 402.7 255.1 403.4 256.9 C404.1 258.7 404.2 261.7 405.0 263.5 C405.8 265.3 406.0 263.3 406.7 264.8 C407.4 266.3 407.4 267.0 408.0 270.1 C408.6 273.2 408.8 276.2 409.3 278.0 C409.8 279.8 409.6 281.4 410.0 278.0 C410.4 274.6 410.5 271.2 411.1 263.5 C411.7 255.8 411.9 249.7 412.6 245.1 C413.3 240.5 413.4 245.7 414.0 243.7 C414.6 241.7 414.8 235.0 415.3 236.5 C415.8 238.0 415.8 245.5 416.3 250.3 C416.8 255.1 416.8 256.7 417.3 256.9 C417.8 257.1 418.0 250.1 418.6 251.0 C419.2 251.9 419.3 257.4 419.9 260.9 C420.5 264.4 420.6 264.1 421.2 266.2 C421.8 268.3 421.9 270.7 422.5 270.1 C423.1 269.5 423.2 267.7 423.8 263.5 C424.4 259.3 424.6 250.0 425.2 252.3 C425.8 254.6 425.9 272.9 426.5 273.4 C427.1 273.9 427.2 258.5 427.8 254.3 C428.4 250.1 428.3 256.5 429.1 255.6 C429.9 254.7 430.3 253.1 431.1 250.3 C431.9 247.5 432.1 244.6 432.7 243.7 C433.3 242.8 433.2 243.0 433.7 246.4 C434.2 249.8 434.2 258.5 434.8 258.2 C435.4 257.9 435.5 248.5 436.1 245.1 C436.7 241.7 436.8 247.1 437.4 243.7 C438.0 240.3 438.0 234.7 438.7 230.5 C439.4 226.3 439.8 226.3 440.6 225.9 C441.4 225.5 441.5 224.4 442.3 228.6 C443.1 232.8 443.2 240.0 444.0 243.7 C444.8 247.4 444.9 242.2 445.6 244.4 C446.3 246.6 446.3 249.8 446.9 253.0 C447.5 256.2 447.4 261.6 448.0 258.2 C448.6 254.8 448.8 243.4 449.3 238.5 C449.8 233.6 449.7 234.8 450.2 237.1 C450.7 239.4 450.8 244.2 451.5 248.4 C452.2 252.6 452.5 256.6 453.3 254.9 C454.1 253.2 454.1 244.2 454.8 241.1 C455.5 238.0 455.5 238.1 456.2 241.8 C456.9 245.5 457.0 254.3 457.7 256.9 C458.4 259.5 458.5 257.9 459.1 253.0 C459.7 248.1 459.8 241.1 460.4 235.8 C461.0 230.6 461.1 231.1 461.7 230.5 C462.3 229.9 462.4 229.3 463.0 233.2 C463.6 237.0 463.5 245.8 464.1 247.0 C464.7 248.2 464.7 241.9 465.4 238.5 C466.1 235.1 466.4 231.9 467.0 232.5 C467.6 233.1 467.4 236.6 468.0 241.1 C468.6 245.6 469.0 248.4 469.6 251.6 C470.2 254.8 470.1 256.1 470.7 254.9 C471.3 253.7 471.4 249.0 472.0 246.4 C472.6 243.8 472.7 242.2 473.3 243.7 C473.9 245.2 473.9 248.7 474.4 253.0 C474.9 257.3 474.8 263.7 475.3 262.2 C475.8 260.7 476.1 250.4 476.6 246.4 C477.1 242.4 477.0 242.3 477.5 245.1 C478.0 247.9 478.0 251.1 478.6 258.2 C479.2 265.3 479.4 270.1 479.9 275.4 C480.4 280.6 480.3 283.5 480.9 280.7 C481.5 277.9 481.7 269.1 482.3 263.5 C482.9 257.9 483.0 256.9 483.6 256.9 C484.2 256.9 484.3 259.2 484.9 263.5 C485.5 267.8 485.6 272.0 486.2 275.4 C486.8 278.8 486.9 280.5 487.5 278.0 C488.1 275.5 488.3 270.2 488.9 264.8 C489.5 259.4 489.6 254.3 490.2 254.9 C490.8 255.5 490.9 261.5 491.5 267.5 C492.1 273.5 492.2 280.1 492.8 280.7 C493.4 281.3 493.5 276.0 494.1 270.1 C494.7 264.2 494.9 260.7 495.5 255.6 C496.1 250.5 496.0 247.5 496.5 248.4 C497.0 249.3 497.2 255.4 497.7 259.6 C498.2 263.8 498.1 265.6 498.6 266.2 C499.1 266.8 499.1 262.8 499.7 262.2 C500.3 261.6 500.4 263.5 501.0 263.5 C501.6 263.5 501.6 265.6 502.3 262.2 C503.0 258.8 503.1 254.5 503.9 249.0 C504.7 243.5 504.9 241.1 505.6 238.5 C506.3 235.9 506.2 236.9 506.9 237.8 C507.6 238.7 507.8 241.9 508.6 242.4 C509.4 242.9 509.5 241.9 510.2 239.8 C510.9 237.7 511.0 235.0 511.8 233.2 C512.6 231.4 512.7 232.2 513.5 231.9 C514.3 231.6 514.5 229.1 515.2 231.9 C515.9 234.7 515.9 236.9 516.5 243.7 C517.1 250.5 517.4 254.1 517.9 260.9 C518.4 267.7 518.3 273.0 518.8 272.7 C519.3 272.4 519.5 264.5 520.1 259.6 C520.7 254.7 520.7 253.1 521.4 251.6 C522.1 250.1 522.4 253.7 523.1 253.0 C523.8 252.3 523.8 249.9 524.5 248.4 C525.2 246.9 525.3 244.7 526.0 246.4 C526.7 248.1 526.8 252.2 527.4 255.6 C528.0 259.0 528.1 256.9 528.7 260.9 C529.3 264.9 529.4 268.7 530.0 272.7 C530.6 276.7 530.6 279.2 531.2 278.0 C531.8 276.8 531.9 272.7 532.5 267.5 C533.1 262.3 533.0 259.4 533.8 255.6 C534.6 251.8 535.0 253.4 535.8 251.0 C536.6 248.6 536.5 247.2 537.1 245.1 C537.7 243.0 537.9 241.5 538.5 241.8 C539.1 242.1 539.1 242.6 539.5 246.4 C539.9 250.2 539.9 253.9 540.4 258.2 C540.9 262.5 541.2 262.6 541.8 264.8 C542.4 267.0 542.5 264.4 543.1 267.5 C543.7 270.6 543.9 277.1 544.4 278.0 C544.9 278.9 544.8 271.7 545.3 271.4 C545.8 271.1 545.7 274.9 546.4 276.7 C547.1 278.5 547.5 278.4 548.4 279.3 C549.3 280.2 549.4 278.8 550.1 280.7 C550.8 282.6 550.9 288.5 551.6 287.3 C552.3 286.1 552.4 279.7 553.0 275.4 C553.6 271.1 553.7 268.2 554.3 268.8 C554.9 269.4 554.8 277.1 555.6 278.0 C556.4 278.9 556.8 275.1 557.6 272.7 C558.4 270.2 558.2 270.6 558.9 267.5 C559.6 264.4 559.8 262.1 560.6 259.6 C561.4 257.1 561.6 256.6 562.2 256.9 C562.8 257.2 562.7 260.6 563.3 260.9 C563.9 261.2 564.0 257.9 564.6 258.2 C565.2 258.5 565.2 260.3 565.9 262.2 C566.6 264.1 566.8 263.8 567.5 266.2 C568.2 268.6 568.3 274.2 569.1 272.7 C569.9 271.2 570.1 259.9 570.8 259.6 C571.5 259.3 571.5 269.9 572.1 271.4 C572.7 272.9 572.7 267.7 573.4 266.2 C574.1 264.7 574.3 267.0 575.1 264.8 C575.9 262.6 575.9 260.7 576.7 256.9 C577.5 253.1 578.0 247.8 578.7 248.4 C579.4 249.0 579.1 255.0 579.6 259.6 C580.1 264.2 580.1 267.8 580.7 268.1 C581.3 268.4 581.5 262.9 582.0 260.9 C582.5 258.9 582.4 256.8 583.0 259.6 C583.6 262.4 583.9 268.4 584.4 272.7 C584.9 277.0 584.9 274.0 585.3 278.0 C585.7 282.0 585.7 286.2 586.2 289.9 C586.7 293.6 586.8 291.7 587.3 293.8 C587.8 295.9 587.9 298.5 588.3 299.1 C588.7 299.7 588.7 301.4 589.2 296.5 C589.7 291.6 589.9 283.6 590.5 278.0 C591.1 272.4 591.4 272.7 591.9 272.7 C592.4 272.7 592.4 273.1 592.8 278.0 C593.2 282.9 593.3 289.5 593.8 293.8 C594.3 298.1 594.3 300.5 594.9 296.5 C595.5 292.5 595.6 282.3 596.2 276.7 C596.8 271.1 596.9 274.1 597.5 272.7 C598.1 271.3 598.2 268.5 598.9 270.8 C599.6 273.1 599.7 282.2 600.4 282.6 C601.1 283.0 601.2 277.2 601.8 272.7 C602.4 268.2 602.5 266.4 603.1 263.5 C603.7 260.6 603.8 259.6 604.4 260.2 C605.0 260.8 605.0 262.3 605.5 266.2 C606.0 270.1 606.0 273.3 606.4 276.7 C606.8 280.1 606.8 281.0 607.3 280.7 C607.8 280.4 608.0 274.5 608.6 275.4 C609.2 276.3 609.1 280.9 609.7 284.6 C610.3 288.3 610.7 289.7 611.0 291.2 L611.9 372" fill="none" stroke="#c9201b" stroke-width="1.4" stroke-linejoin="round"/></g>
<rect x="55.5" y="167.5" width="569" height="201" fill="none" stroke="#666" stroke-width="1"/>
<g font-family="Liberation Sans, Arial, sans-serif" font-size="9.3" fill="#444">
<text x="50" y="170.7" text-anchor="end">200</text>
<text x="50" y="200.0" text-anchor="end">175</text>
<text x="50" y="229.3" text-anchor="end">150</text>
<text x="50" y="258.6" text-anchor="end">125</text>
<text x="50" y="288.0" text-anchor="end">100</text>
<text x="50" y="317.3" text-anchor="end">75</text>
<text x="50" y="346.6" text-anchor="end">50</text>
<text x="56.8" y="383" text-anchor="middle">00:00:00</text>
<text x="151.8" y="383" text-anchor="middle">00:10:00</text>
<text x="246.8" y="383" text-anchor="middle">00:20:00</text>
<text x="341.9" y="383" text-anchor="middle">00:30:00</text>
<text x="436.9" y="383" text-anchor="middle">00:40:00</text>
<text x="532.0" y="383" text-anchor="middle">00:50:00</text>
<text x="659" y="383" text-anchor="end">00:59:45</text>
</g>
<text x="60" y="159" font-family="Liberation Sans, Arial, sans-serif" font-size="10.6" fill="#333">Puls (slag/minut)</text>
<g fill="#000"><g transform="translate(57,345.3) scale(1.0)"><circle cx="5.4" cy="1.7" r="1.45"/><path d="M3.9 3.9 L7.1 3.9 L8.3 5.2 L9.2 8.5 L9.9 12.8 L9.1 13.2 L7.7 8.4 L7.4 11.8 L7.9 17 L8 21.6 L9 22.6 L6.4 22.6 L6 17 L5.2 13.6 L4 17.6 L2.9 21.6 L3.1 22.6 L0.6 22.6 L1.9 17 L3.1 11.6 L3 10 L0.4 8 L2.6 4.6 Z M2.1 7.6 L3 6.4 L3 8.6Z" fill-rule="evenodd"/></g><g transform="translate(115.8,351) scale(1.0)"><circle cx="7.2" cy="1.5" r="1.4"/><path d="M6.5 2.8 L7.9 2.8 L8.1 4 L9.6 4.4 L10.6 6.2 L13 10.9 L14.4 11.9 C14.7 13.9 12 15.4 7.2 15.4 C2.4 15.4 -0.3 13.9 0 11.9 L1.4 10.9 L3.8 6.2 L4.8 4.4 L6.3 4 Z M4.9 6.8 L2.9 11 L4.9 10.4 Z M9.5 6.8 L11.5 11 L9.5 10.4 Z" fill-rule="evenodd"/></g><g transform="translate(139.8,345.3) scale(1.0)"><g fill="none" stroke="#000" stroke-linecap="round" stroke-linejoin="round"><path d="M6.6 12.5 L3.6 17 L1 22" stroke-width="2"/><path d="M6.8 12.5 L8.6 17 L11.3 22" stroke-width="1.9"/><path d="M6.7 12.6 L8.6 6" stroke-width="2.8"/><path d="M8.3 6.5 Q9 2.2 13.4 0.7" stroke-width="1.1"/><path d="M9.6 5 Q10.5 2.5 13.6 1.2" stroke-width=".8"/></g><circle cx="10.4" cy="6.5" r="1.35"/><path d="M0 22.6 L2 21.4 L2.2 22.6Z M10.5 22.6 L12.6 22.6 L11.6 21.3Z"/></g></g>
</svg>

<div class="panel" style="left:678px;top:110px;width:260px;height:286px">
 <div class="ph" style="height:27px"><b style="font-size:11.4px;top:6px;left:6px">Sportzoner</b></div>
 <div class="abs" style="left:3px;top:34px;color:#444">Puls (slag/minut)</div>
 <div class="zr" style="top:50px"><span class="hi" style="top:2px">183</span><span class="lo" style="top:28px">165</span><span class="pc">0 %</span><span class="tm">00:00:00</span></div>
 <div class="zr" style="top:93px"><span class="lo" style="top:28px">146</span><span class="pc">0 %</span><span class="tm">00:00:07</span></div>
 <div class="zr" style="top:136px"><div class="bar" style="width:8px;background:linear-gradient(#b6d568,#6e8f2a)"></div><span class="lo" style="top:28px">128</span><span class="pc">8 %</span><span class="tm">00:04:47</span></div>
 <div class="zr" style="top:179px"><div class="bar" style="width:31px;background:linear-gradient(#a9cde3,#4f7f9c)"></div><span class="lo" style="top:28px">110</span><span class="pc">31 %</span><span class="tm">00:18:41</span></div>
 <div class="zr" style="top:222px"><div class="bar" style="width:42px;background:linear-gradient(#c9c9c9,#7a7a7a)"></div><span class="lo" style="top:28px">92</span><span class="pc">42 %</span><span class="tm">00:25:01</span></div>
 <div class="zr" style="top:265px;height:1px"></div>
</div>

<div class="panel" style="left:14px;top:406px;width:652px;height:220px">
 <div class="ph"><b style="font-size:11.4px;left:5px;top:7.5px">Sporter</b><div class="sep" style="left:54px"></div></div>
 <table id="st">
  <colgroup><col style="width:26px"><col style="width:108px"><col style="width:97px"><col style="width:68px"><col style="width:92px"><col style="width:91px"><col style="width:71px"><col></colgroup>
  <tr><th style="text-align:left;padding-left:6px">Nr</th><th style="text-align:left;padding-left:4px">Sport</th><th>Träningstid</th><th>Sträcka</th><th>Medelpuls</th><th>Snittempo</th><th>Kalorier</th><th></th></tr>
  <tr><td>1.</td><td class="sp"><i><svg width="8.8" height="20" viewBox="0 0 10.06 22.86"><circle cx="5.4" cy="1.7" r="1.45"/><path d="M3.9 3.9 L7.1 3.9 L8.3 5.2 L9.2 8.5 L9.9 12.8 L9.1 13.2 L7.7 8.4 L7.4 11.8 L7.9 17 L8 21.6 L9 22.6 L6.4 22.6 L6 17 L5.2 13.6 L4 17.6 L2.9 21.6 L3.1 22.6 L0.6 22.6 L1.9 17 L3.1 11.6 L3 10 L0.4 8 L2.6 4.6 Z M2.1 7.6 L3 6.4 L3 8.6Z" fill-rule="evenodd"/></svg></i><span>Crosstrainer</span></td><td>00:06:16</td><td>km</td><td>112 bpm</td><td></td><td>38</td><td><span class="btn">Öppna</span></td></tr>
  <tr><td>2.</td><td class="sp"><i><svg width="14.5" height="14" viewBox="-0.3 0 15.2 15.6" style="position:relative;top:-0.6px"><circle cx="7.2" cy="1.5" r="1.4"/><path d="M6.5 2.8 L7.9 2.8 L8.1 4 L9.6 4.4 L10.6 6.2 L13 10.9 L14.4 11.9 C14.7 13.9 12 15.4 7.2 15.4 C2.4 15.4 -0.3 13.9 0 11.9 L1.4 10.9 L3.8 6.2 L4.8 4.4 L6.3 4 Z M4.9 6.8 L2.9 11 L4.9 10.4 Z M9.5 6.8 L11.5 11 L9.5 10.4 Z" fill-rule="evenodd"/></svg></i><span>Yoga/Stretch</span></td><td>00:02:31</td><td>km</td><td>105 bpm</td><td></td><td>13</td><td><span class="btn">Öppna</span></td></tr>
  <tr><td>3.</td><td class="sp"><i><svg width="12.4" height="20" viewBox="0 0 14.17 22.86"><g fill="none" stroke="#000" stroke-linecap="round" stroke-linejoin="round"><path d="M6.6 12.5 L3.6 17 L1 22" stroke-width="2"/><path d="M6.8 12.5 L8.6 17 L11.3 22" stroke-width="1.9"/><path d="M6.7 12.6 L8.6 6" stroke-width="2.8"/><path d="M8.3 6.5 Q9 2.2 13.4 0.7" stroke-width="1.1"/><path d="M9.6 5 Q10.5 2.5 13.6 1.2" stroke-width=".8"/></g><circle cx="10.4" cy="6.5" r="1.35"/><path d="M0 22.6 L2 21.4 L2.2 22.6Z M10.5 22.6 L12.6 22.6 L11.6 21.3Z"/></svg></i><span>Styrketräning</span></td><td>00:49:00</td><td>km</td><td>118 bpm</td><td></td><td>349</td><td><span class="btn">Öppna</span></td></tr>
  <tr><td>4.</td><td class="sp"><i><svg width="14.5" height="14" viewBox="-0.3 0 15.2 15.6" style="position:relative;top:-0.6px"><circle cx="7.2" cy="1.5" r="1.4"/><path d="M6.5 2.8 L7.9 2.8 L8.1 4 L9.6 4.4 L10.6 6.2 L13 10.9 L14.4 11.9 C14.7 13.9 12 15.4 7.2 15.4 C2.4 15.4 -0.3 13.9 0 11.9 L1.4 10.9 L3.8 6.2 L4.8 4.4 L6.3 4 Z M4.9 6.8 L2.9 11 L4.9 10.4 Z M9.5 6.8 L11.5 11 L9.5 10.4 Z" fill-rule="evenodd"/></svg></i><span>Yoga/Stretch</span></td><td>00:01:46</td><td>km</td><td>101 bpm</td><td></td><td>1</td><td><span class="btn">Öppna</span></td></tr>
 </table>
</div>
</body></html>
